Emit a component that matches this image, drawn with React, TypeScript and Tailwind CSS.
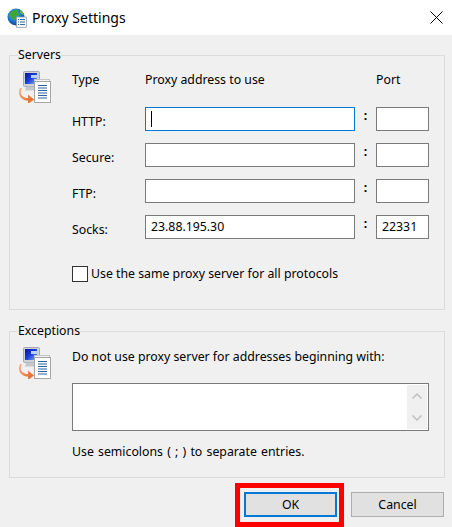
import React from 'react';

const GroupIcon = () => (
  <svg width="32" height="32" viewBox="0 0 32 32" className="shrink-0">
    <defs>
      <linearGradient id="screen" x1="0" y1="0" x2="1" y2="1">
        <stop offset="0" stopColor="#06129c" />
        <stop offset="0.5" stopColor="#1b3fd6" />
        <stop offset="1" stopColor="#8fb2ea" />
      </linearGradient>
      <linearGradient id="arrow" x1="0" y1="0" x2="1" y2="1">
        <stop offset="0" stopColor="#f6b48a" />
        <stop offset="1" stopColor="#e25e18" />
      </linearGradient>
    </defs>
    <rect x="4.500" y="0.500" width="16" height="15" rx="1" fill="#cfd2d8" stroke="#a3a8b2" />
    <rect x="6" y="2" width="12" height="11" fill="url(#screen)" />
    <rect x="12" y="4" width="7" height="3" fill="#b9cff2" />
    <path d="M7 15.500h11l2 4H6z" fill="#c4c7cc" />
    <rect x="15.500" y="8.500" width="15" height="20" fill="#f4f4f4" stroke="#c4c4c4" />
    <rect x="15.500" y="10.500" width="16" height="21" fill="#ffffff" stroke="#a6a6a6" />
    <path
      d="M19 14.500h9M19 17h9M19 19.500h9M19 22h9M19 24.500h9M19 27h9"
      stroke="#2c62a6"
      strokeWidth="1.200"
      fill="none"
    />
    <path
      d="M3 17c-3 5 0 10 6 10v-3.500l6 5-6 4.500v-3.500c-7 0-11-6-8-12.500z"
      fill="url(#arrow)"
    />
  </svg>
);

const GlobeIcon = () => (
  <svg width="20" height="20" viewBox="0 0 20 20">
    <defs>
      <radialGradient id="globe" cx="0.4" cy="0.35" r="0.7">
        <stop offset="0" stopColor="#5cc0f0" />
        <stop offset="0.6" stopColor="#1a6fc4" />
        <stop offset="1" stopColor="#0c3f86" />
      </radialGradient>
    </defs>
    <circle cx="9" cy="9" r="8.500" fill="url(#globe)" />
    <path
      d="M4 4c2-2 5-3 7-2 1 1-1 2-1 3s2 1 2 2-2 1-3 2-1 3-2 3-2-2-3-3-2-1-2-2 1-2 2-3z"
      fill="#3fa535"
    />
    <path d="M13 2c2 1 3.500 3 4 5l-2-.5-2-2z" fill="#6dbb3c" />
    <rect x="9.500" y="9" width="10" height="10.500" fill="#f4f6f8" stroke="#8d99a8" strokeWidth="0.700" />
    <path
      d="M11 11.500h1M13 11.500h5M11 14h1M13 14h5M11 16.500h1M13 16.500h5"
      stroke="#2f6db0"
      strokeWidth="1"
    />
  </svg>
);

const FieldRow = ({
  label,
  address = '',
  port = '',
  focused = false,
}: {
  label: string;
  address?: string;
  port?: string;
  focused?: boolean;
}) => (
  <div className="flex h-6 items-center">
    <span className="w-[73px] shrink-0 pt-[5px]">{label}</span>
    <div
      className={`flex h-6 w-[210px] shrink-0 items-center border bg-white pl-[5px] ${
        focused ? 'border-[#0078d7]' : 'border-[#7a7a7a]'
      }`}
    >
      {focused && <span className="h-4 w-px bg-black" />}
      {address}
    </div>
    <span className="w-[21px] shrink-0 pb-[6px] text-center font-bold leading-none">:</span>
    <div className="flex h-6 w-[53px] shrink-0 items-center border border-[#7a7a7a] bg-white pl-[5px]">
      {port}
    </div>
  </div>
);

export default function App() {
  return (
    <div className="flex h-[527px] w-[452px] flex-col overflow-hidden bg-[#f0f0f0] font-['Noto_Sans',sans-serif] text-[12.3px] leading-4 text-black">
      <div className="flex h-[35px] shrink-0 items-center bg-white pl-[7px] pr-[9px]">
        <GlobeIcon />
        <span className="ml-[5px] text-[14px]">Proxy Settings</span>
        <svg width="13" height="13" viewBox="0 0 13 13" className="ml-auto">
          <path d="M0.500 0.500l12 12M12.500 0.500l-12 12" stroke="#000" strokeWidth="1" fill="none" />
        </svg>
      </div>

      <div className="flex flex-col pl-[9px] pr-[7px] pt-[12px]">
        <fieldset className="h-[263px] border border-[#dcdcdc] pl-[8px]">
          <legend>Servers</legend>
          <div className="flex pl-px pt-[8px]">
            <GroupIcon />
            <div className="ml-[21px] mt-px flex flex-col">
              <div className="flex h-4 items-center">
                <span className="w-[73px]">Type</span>
                <span className="w-[231px]">Proxy address to use</span>
                <span>Port</span>
              </div>
              <div className="mt-[19px] flex flex-col gap-3">
                <FieldRow label="HTTP:" focused />
                <FieldRow label="Secure:" />
                <FieldRow label="FTP:" />
                <FieldRow label="Socks:" address="23.88.195.30" port="22331" />
              </div>
              <label className="mt-[26px] flex items-center">
                <span className="h-4 w-4 border border-[#333333] bg-white" />
                <span className="ml-[3px] pt-px">Use the same proxy server for all protocols</span>
              </label>
            </div>
          </div>
        </fieldset>

        <fieldset className="mt-[13px] h-[155px] border border-[#dcdcdc] pl-[8px]">
          <legend>Exceptions</legend>
          <div className="flex pl-px pt-[8px]">
            <GroupIcon />
            <div className="ml-[21px] mt-px flex flex-col">
              <span className="pt-px">Do not use proxy server for addresses beginning with:</span>
              <div className="mt-[18px] flex h-12 w-[357px] justify-end border border-[#7a7a7a] bg-white p-px">
                <div className="flex w-5 flex-col items-center justify-between bg-[#f0f0f0] py-2">
                  <svg width="10" height="6" viewBox="0 0 10 6">
                    <path d="M0.500 5.500l4.500-4.500 4.500 4.500" stroke="#c0c0c0" strokeWidth="1.500" fill="none" />
                  </svg>
                  <svg width="10" height="6" viewBox="0 0 10 6">
                    <path d="M0.500 0.500l4.500 4.500 4.500-4.500" stroke="#c0c0c0" strokeWidth="1.500" fill="none" />
                  </svg>
                </div>
              </div>
              <span className="mt-[13px] [word-spacing:1px]">Use semicolons ( ; ) to separate entries.</span>
            </div>
          </div>
        </fieldset>
      </div>

      <div className="mt-[5px] flex items-start justify-end gap-[7px] pr-2">
        <div className="border-[5px] border-[#ff0000] pb-[5px] pl-1 pr-[2px] pt-1">
          <button className="block h-[25px] w-[93px] border-2 border-[#0078d7] bg-[#e1e1e1]">OK</button>
        </div>
        <button className="mt-[9px] h-[25px] w-[93px] border border-[#adadad] bg-[#e1e1e1]">Cancel</button>
      </div>
    </div>
  );
}
